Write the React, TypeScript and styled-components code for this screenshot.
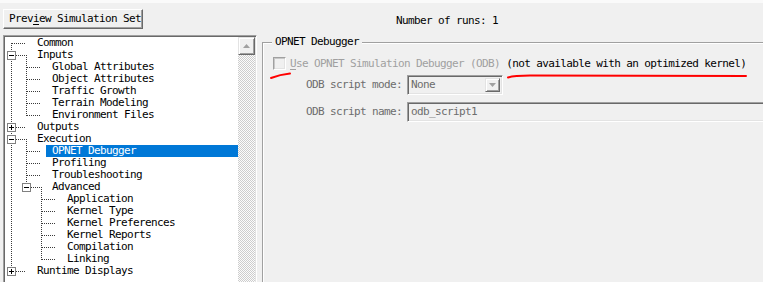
import * as React from 'react';
import styled, { createGlobalStyle } from 'styled-components';

const mono = `"DejaVu Sans Mono", "Liberation Mono", monospace`;

const GlobalStyle = createGlobalStyle`
  html, body {
    margin: 0;
    background: #f0f0f0;
    overflow: hidden;
  }
  body {
    font-family: ${mono};
    font-size: 11px;
    letter-spacing: -0.62px;
    color: #000;
  }
`;

const Page = styled.div`
  position: relative;
  width: 763px;
  height: 282px;
  overflow: hidden;
  display: flex;
  flex-direction: column;
`;

const TopStrip = styled.div`
  height: 3px;
  background: #fafafa;
  flex-shrink: 0;
`;

const TopBar = styled.div`
  display: flex;
  align-items: flex-start;
  height: 32px;
  padding: 6px 0 0 3px;
  box-sizing: border-box;
  flex-shrink: 0;
`;

const PushButton = styled.button`
  width: 140px;
  height: 20px;
  box-sizing: border-box;
  padding: 0 5px;
  margin: 0;
  text-align: left;
  font: inherit;
  letter-spacing: inherit;
  line-height: 18px;
  color: #000;
  background: #f0f0f0;
  border: 1px solid;
  border-color: #fff #696969 #696969 #fff;
  box-shadow: inset -1px -1px #a0a0a0;
  white-space: nowrap;
`;

const Mnemonic = styled.span`
  text-decoration: underline;
  text-underline-offset: 2px;
`;

const RunsLabel = styled.div`
  margin: 6px 0 0 253px;
  line-height: 12px;
  white-space: nowrap;
`;

const Main = styled.div`
  display: flex;
  flex: 1;
  min-height: 0;
  align-items: flex-start;
`;

const TreeBox = styled.div`
  margin-left: 3px;
  width: 254px;
  height: 260px;
  flex-shrink: 0;
  box-sizing: border-box;
  padding: 1px;
  border: 1px solid;
  border-color: #a0a0a0 #fff #fff #a0a0a0;
  box-shadow: inset 1px 1px #696969, inset -1px -1px #e3e3e3;
  background: #fff;
  display: flex;
`;

const TreeList = styled.div`
  flex: 1;
  overflow: hidden;
  display: flex;
  flex-direction: column;
`;

const Row = styled.div`
  display: flex;
  height: 12px;
  flex-shrink: 0;
`;

const Label = styled.div<{ $selected?: boolean }>`
  flex: 1;
  padding: 0 6px;
  line-height: 12px;
  white-space: nowrap;
  background: ${({ $selected }) => ($selected ? '#0078d7' : 'transparent')};
  color: ${({ $selected }) => ($selected ? '#fff' : '#000')};
`;

const Scrollbar = styled.div`
  width: 17px;
  flex-shrink: 0;
  display: flex;
  flex-direction: column;
`;

const ScrollButton = styled.div`
  height: 18px;
  box-sizing: border-box;
  background: #f0f0f0;
  border: 1px solid;
  border-color: #e3e3e3 #696969 #696969 #e3e3e3;
  box-shadow: inset 1px 1px #fff, inset -1px -1px #a0a0a0;
  display: flex;
  align-items: center;
  justify-content: center;
`;

const ScrollTrack = styled.div`
  flex: 1;
  background: repeating-conic-gradient(#cdcdcd 0 25%, #fcfcfc 0 50%) 0 0 / 2px 2px;
`;

const GroupBox = styled.div`
  margin: 7px -20px 0 5px;
  flex: 1;
  align-self: stretch;
  border: 1px solid #a0a0a0;
  border-right: none;
  border-bottom: none;
  box-shadow: inset 1px 1px #fff;
  display: flex;
  flex-direction: column;
  align-items: flex-start;
`;

const Legend = styled.div`
  margin: -7px 0 0 9px;
  padding: 0 3px;
  background: #f0f0f0;
  line-height: 12px;
  white-space: nowrap;
`;

const CheckRow = styled.div`
  display: flex;
  align-items: center;
  height: 13px;
  margin: 9px 0 0 10px;
  white-space: nowrap;
`;

const CheckBox = styled.span`
  width: 13px;
  height: 13px;
  box-sizing: border-box;
  flex-shrink: 0;
  margin-right: 4px;
  background: #f0f0f0;
  border: 1px solid;
  border-color: #a0a0a0 #fff #fff #a0a0a0;
  box-shadow: inset 1px 1px #c8c8c8, inset -1px -1px #e3e3e3;
`;

const CheckText = styled.span`
  line-height: 12px;
`;

const Disabled = styled.span`
  color: #a0a0a0;
`;

const Underline = styled.span`
  text-decoration: underline;
  text-underline-offset: 2px;
`;

const Form = styled.div`
  display: grid;
  grid-template-columns: 96px 1fr;
  column-gap: 5px;
  row-gap: 7px;
  align-items: center;
  align-self: stretch;
  margin: 5px 0 0 43px;
`;

const FieldLabel = styled.div`
  color: #6d6d6d;
  line-height: 12px;
  white-space: nowrap;
`;

const sunken = `
  box-sizing: border-box;
  height: 20px;
  background: #f0f0f0;
  border: 1px solid;
  border-color: #a0a0a0 #fff #fff #a0a0a0;
  box-shadow: inset 1px 1px #696969, inset -1px -1px #e3e3e3;
  color: #6d6d6d;
  display: flex;
  align-items: center;
  line-height: 12px;
  white-space: nowrap;
`;

const Combo = styled.div`
  ${sunken}
  width: 96px;
  justify-content: space-between;
  padding: 0 2px 0 3px;
`;

const ComboButton = styled.span`
  width: 15px;
  height: 14px;
  box-sizing: border-box;
  background: #f0f0f0;
  border: 1px solid;
  border-color: #e3e3e3 #696969 #696969 #e3e3e3;
  box-shadow: inset 1px 1px #fff, inset -1px -1px #a0a0a0;
  display: flex;
  align-items: center;
  justify-content: center;
`;

const TextField = styled.div`
  ${sunken}
  padding-left: 3px;
`;

const Annotations = styled.svg`
  position: absolute;
  left: 0;
  top: 0;
  pointer-events: none;
`;

interface TreeNode {
  label: string;
  children?: TreeNode[];
  closed?: boolean;
  selected?: boolean;
}

interface FlatRow {
  node: TreeNode;
  depth: number;
  guides: boolean[];
  hasNext: boolean;
  first: boolean;
}

const tree: TreeNode[] = [
  { label: 'Common' },
  {
    label: 'Inputs',
    children: [
      { label: 'Global Attributes' },
      { label: 'Object Attributes' },
      { label: 'Traffic Growth' },
      { label: 'Terrain Modeling' },
      { label: 'Environment Files' },
    ],
  },
  { label: 'Outputs', closed: true },
  {
    label: 'Execution',
    children: [
      { label: 'OPNET Debugger', selected: true },
      { label: 'Profiling' },
      { label: 'Troubleshooting' },
      {
        label: 'Advanced',
        children: [
          { label: 'Application' },
          { label: 'Kernel Type' },
          { label: 'Kernel Preferences' },
          { label: 'Kernel Reports' },
          { label: 'Compilation' },
          { label: 'Linking' },
        ],
      },
    ],
  },
  { label: 'Runtime Displays', closed: true },
];

// the list goes on below the visible part
const rootContinues = true;

function flatten(nodes: TreeNode[], depth: number, guides: boolean[], out: FlatRow[]) {
  nodes.forEach((node, i) => {
    const hasNext = i < nodes.length - 1 || (depth === 0 && rootContinues);
    out.push({ node, depth, guides, hasNext, first: depth === 0 && i === 0 });
    if (node.children) flatten(node.children, depth + 1, [...guides, hasNext], out);
  });
  return out;
}

const dot = { stroke: '#3a3a3a', strokeWidth: 1, strokeDasharray: '1 1' };

function Guide({ line }: { line: boolean }) {
  return (
    <svg width="15" height="12" style={{ flexShrink: 0, display: 'block' }}>
      {line && <line x1="6.5" y1="0" x2="6.5" y2="12" {...dot} />}
    </svg>
  );
}

function Connector({ row }: { row: FlatRow }) {
  const { node, first, hasNext } = row;
  const open = !!node.children;
  const expander = open || node.closed;
  const y1 = first ? 6 : 0;
  const y2 = hasNext ? 12 : 7;

  return (
    <svg width="26" height="12" style={{ flexShrink: 0, display: 'block' }}>
      <line x1="6.5" y1={y1} x2="6.5" y2={y2} {...dot} />
      <line x1={expander ? 11 : 7} y1="6.5" x2={open ? 22 : 20} y2="6.5" {...dot} />
      {open && <line x1="21.5" y1="6" x2="21.5" y2="12" {...dot} />}
      {expander && (
        <g shapeRendering="crispEdges">
          <rect x="2.5" y="2.5" width="8" height="8" fill="#fff" stroke="#808080" />
          <line x1="4" y1="6.5" x2="9" y2="6.5" stroke="#000" />
          {node.closed && <line x1="6.5" y1="4" x2="6.5" y2="9" stroke="#000" />}
        </g>
      )}
    </svg>
  );
}

export default function App() {
  const rows = flatten(tree, 0, [], []);

  return (
    <Page>
      <GlobalStyle />
      <TopStrip />
      <TopBar>
        <PushButton>
          Prev<Mnemonic>i</Mnemonic>ew Simulation Set
        </PushButton>
        <RunsLabel>Number of runs: 1</RunsLabel>
      </TopBar>
      <Main>
        <TreeBox>
          <TreeList>
            {rows.map((row, key) => (
              <Row key={key}>
                {row.guides.map((g, i) => <Guide key={i} line={g} />)}
                <Connector row={row} />
                <Label $selected={row.node.selected}>{row.node.label}</Label>
              </Row>
            ))}
          </TreeList>
          <Scrollbar>
            <ScrollButton>
              <svg width="7" height="4">
                <path d="M3.5 0 L7 4 L0 4 Z" fill="#a0a0a0" />
              </svg>
            </ScrollButton>
            <ScrollTrack />
          </Scrollbar>
        </TreeBox>
        <GroupBox>
          <Legend>OPNET Debugger</Legend>
          <CheckRow>
            <CheckBox />
            <CheckText>
              <Disabled>
                <Underline>U</Underline>se OPNET Simulation Debugger (ODB)
              </Disabled>{' '}
              (not available with an optimized kernel)
            </CheckText>
          </CheckRow>
          <Form>
            <FieldLabel>ODB script mode:</FieldLabel>
            <Combo>
              None
              <ComboButton>
                <svg width="7" height="4">
                  <path d="M0 0 L7 0 L3.5 4 Z" fill="#a0a0a0" />
                </svg>
              </ComboButton>
            </Combo>
            <FieldLabel>ODB script name:</FieldLabel>
            <TextField>odb_script1</TextField>
          </Form>
        </GroupBox>
      </Main>
      <Annotations width="763" height="282">
        <path d="M271 78 Q280 74.5 290 73.5" stroke="#ff0000" strokeWidth="2" fill="none" strokeLinecap="round" />
        <path d="M508 77.5 Q514 75.5 530 75.5 L746 76" stroke="#ff0000" strokeWidth="2" fill="none" strokeLinecap="round" />
      </Annotations>
    </Page>
  );
}
